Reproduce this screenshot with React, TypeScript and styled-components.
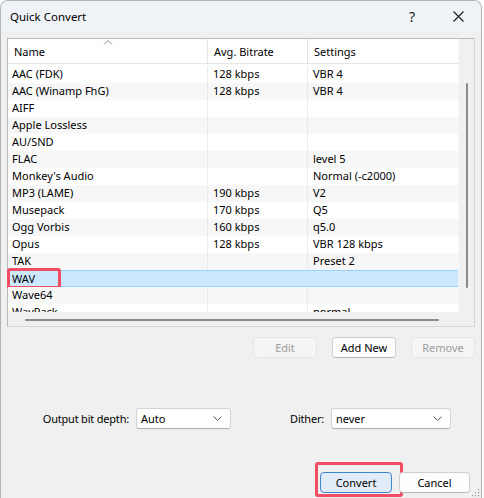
import React from 'react';
import styled, { createGlobalStyle, css } from 'styled-components';

const GlobalStyle = createGlobalStyle`
  html, body {
    margin: 0;
    padding: 0;
    background: #ffffff;
  }
  body {
    font-family: "Noto Sans", "Segoe UI", sans-serif;
    font-size: 11px;
    color: #000;
  }
`;

type Codec = [string, string, string];

const codecs: Codec[] = [
  ['AAC (FDK)', '128 kbps', 'VBR 4'],
  ['AAC (Winamp FhG)', '128 kbps', 'VBR 4'],
  ['AIFF', '', ''],
  ['Apple Lossless', '', ''],
  ['AU/SND', '', ''],
  ['FLAC', '', 'level 5'],
  ["Monkey's Audio", '', 'Normal (-c2000)'],
  ['MP3 (LAME)', '190 kbps', 'V2'],
  ['Musepack', '170 kbps', 'Q5'],
  ['Ogg Vorbis', '160 kbps', 'q5.0'],
  ['Opus', '128 kbps', 'VBR 128 kbps'],
  ['TAK', '', 'Preset 2'],
  ['WAV', '', ''],
  ['Wave64', '', ''],
  ['WavPack', '', 'normal'],
];

const SELECTED = 12;

const Window = styled.div`
  position: relative;
  width: 482px;
  height: 498px;
  box-sizing: border-box;
  border: 1px solid #b4b4b4;
  border-bottom: none;
  border-radius: 8px 8px 0 0;
  background: #f0f0f0;
  display: flex;
  flex-direction: column;
  overflow: hidden;
`;

const TitleBar = styled.div`
  height: 31px;
  flex: none;
  display: flex;
  align-items: center;
  background: #eff3f8;
  padding-left: 9px;
`;

const Title = styled.div`
  font-size: 11.5px;
  flex: 1;
`;

const CaptionButton = styled.div`
  width: 46px;
  height: 31px;
  display: flex;
  align-items: center;
  justify-content: center;
  font-size: 14px;
  color: #1a1a1a;
`;

const Body = styled.div`
  flex: 1;
  display: flex;
  flex-direction: column;
  padding: 6px 6px 0 6px;
`;

const ListBox = styled.div`
  width: 468px;
  height: 289px;
  box-sizing: border-box;
  border: 1px solid #b9b9b9;
  border-right-color: #d6d6d6;
  border-bottom-color: #d6d6d6;
  display: grid;
  grid-template-columns: 450px 16px;
  grid-template-rows: 273px 14px;
  background: #f0f0f0;
`;

const ListArea = styled.div`
  background: #fff;
  overflow-x: visible;
  overflow-y: clip;
  position: relative;
`;

const cols = '199px 100px 151px';

const HeaderRow = styled.div`
  display: grid;
  grid-template-columns: ${cols};
  height: 25px;
  box-sizing: border-box;
  border-bottom: 1px solid #e5e5e5;
  margin-bottom: 2px;
`;

const HeaderCell = styled.div<{ $first?: boolean }>`
  position: relative;
  line-height: 25px;
  padding-left: 6px;
  ${(p) =>
    !p.$first &&
    css`
      border-left: 1px solid #e5e5e5;
    `}
`;

const SortArrow = styled.svg`
  position: absolute;
  top: 1px;
  left: 50%;
  transform: translateX(-50%);
`;

const Row = styled.div<{ $alt: boolean; $selected: boolean }>`
  position: relative;
  display: grid;
  grid-template-columns: ${cols};
  height: 17px;
  box-sizing: border-box;
  background: ${(p) => (p.$selected ? '#cce8ff' : p.$alt ? '#f7f7f7' : '#fff')};
  ${(p) =>
    p.$selected &&
    css`
      border-top: 1px solid #99d1ff;
      border-bottom: 1px solid #99d1ff;
    `}
`;

const Cell = styled.div<{ $first?: boolean; $selected?: boolean }>`
  line-height: 16px;
  padding-left: ${(p) => (p.$first ? '4px' : '5px')};
  white-space: nowrap;
  overflow: hidden;
  ${(p) =>
    !p.$first &&
    css`
      border-left: 1px solid ${p.$selected ? 'transparent' : '#ebebeb'};
    `}
`;

const Highlight = styled.div`
  position: absolute;
  box-sizing: border-box;
  border: 3px solid #ee4d63;
  border-radius: 3px;
  pointer-events: none;
`;

const RowHighlight = styled(Highlight)`
  left: -1px;
  top: -3px;
  width: 54px;
  height: 21px;
`;

const VScroll = styled.div`
  background: #f0f0f0;
  border-left: 1px solid #f7f7f7;
`;

const VThumb = styled.div`
  width: 2px;
  height: 205px;
  margin: 44px 0 0 7px;
  background: #8a8a8a;
  border-radius: 1px;
`;

const HScroll = styled.div`
  background: #f0f0f0;
`;

const HThumb = styled.div`
  width: 414px;
  height: 2px;
  margin: 7px 0 0 17px;
  background: #8a8a8a;
  border-radius: 1px;
`;

const Corner = styled.div`
  background: #f0f0f0;
`;

const ButtonRow = styled.div`
  display: flex;
  justify-content: flex-end;
  gap: 15px;
  margin-top: 10px;
  width: 468px;
`;

const Button = styled.div<{ $disabled?: boolean; $primary?: boolean; $w?: number }>`
  position: relative;
  width: ${(p) => p.$w ?? 64}px;
  height: 21px;
  box-sizing: border-box;
  display: flex;
  align-items: center;
  justify-content: center;
  border-radius: 4px;
  border: 1px solid #d0d0d0;
  border-bottom-color: #b8b8b8;
  background: #fdfdfd;
  color: #000;
  ${(p) =>
    p.$disabled &&
    css`
      background: #f5f5f5;
      border-color: #e5e5e5;
      color: #9d9d9d;
    `}
  ${(p) =>
    p.$primary &&
    css`
      background: #e0edf9;
      border-color: #3c86d2;
    `}
`;

const OptionsRow = styled.div`
  display: flex;
  align-items: center;
  margin-top: 50px;
  padding-left: 39px;
`;

const Label = styled.div<{ $w: number }>`
  width: ${(p) => p.$w}px;
  margin-right: 7px;
  display: flex;
  justify-content: flex-end;
  white-space: nowrap;
  letter-spacing: -0.2px;
`;

const Select = styled.div<{ $w: number }>`
  width: ${(p) => p.$w}px;
  height: 21px;
  box-sizing: border-box;
  display: flex;
  align-items: center;
  justify-content: space-between;
  padding: 0 8px 0 4px;
  background: #fff;
  border: 1px solid #d4d4d4;
  border-bottom-color: #b0b0b0;
  border-radius: 3px;
`;

const Spacer = styled.div<{ $w: number }>`
  width: ${(p) => p.$w}px;
`;

const Footer = styled.div`
  display: flex;
  justify-content: flex-end;
  gap: 7px;
  margin-top: 43px;
  padding-right: 5px;
`;

const ConvertHighlight = styled(Highlight)`
  left: -6px;
  top: -11px;
  width: 88px;
  height: 35px;
`;

const Grip = styled.svg`
  position: absolute;
  right: 1px;
  bottom: 1px;
`;

const Chevron = () => (
  <svg width="9" height="5" viewBox="0 0 9 5">
    <path d="M0.5 0.5 L4.5 4.5 L8.5 0.5" fill="none" stroke="#606060" strokeWidth="1" />
  </svg>
);

export default function App() {
  return (
    <>
      <GlobalStyle />
      <Window>
        <TitleBar>
          <Title>Quick Convert</Title>
          <CaptionButton>?</CaptionButton>
          <CaptionButton>
            <svg width="11" height="11" viewBox="0 0 11 11">
              <path d="M0.5 0.5 L10.5 10.5 M10.5 0.5 L0.5 10.5" stroke="#1a1a1a" strokeWidth="1.1" />
            </svg>
          </CaptionButton>
        </TitleBar>
        <Body>
          <ListBox>
            <ListArea>
              <HeaderRow>
                <HeaderCell $first>
                  <SortArrow width="9" height="5" viewBox="0 0 9 5">
                    <path d="M0.5 4.5 L4.5 0.5 L8.5 4.5" fill="none" stroke="#8a8a8a" strokeWidth="1" />
                  </SortArrow>
                  Name
                </HeaderCell>
                <HeaderCell>Avg. Bitrate</HeaderCell>
                <HeaderCell>Settings</HeaderCell>
              </HeaderRow>
              {codecs.map((c, i) => {
                const selected = i === SELECTED;
                return (
                  <Row key={c[0]} $alt={i % 2 === 1} $selected={selected}>
                    <Cell $first>{c[0]}</Cell>
                    <Cell $selected={selected}>{c[1]}</Cell>
                    <Cell $selected={selected}>{c[2]}</Cell>
                    {selected && <RowHighlight />}
                  </Row>
                );
              })}
            </ListArea>
            <VScroll>
              <VThumb />
            </VScroll>
            <HScroll>
              <HThumb />
            </HScroll>
            <Corner />
          </ListBox>
          <ButtonRow>
            <Button $disabled>Edit</Button>
            <Button>Add New</Button>
            <Button $disabled>Remove</Button>
          </ButtonRow>
          <OptionsRow>
            <Label $w={83}>Output bit depth:</Label>
            <Select $w={95}>
              Auto
              <Chevron />
            </Select>
            <Spacer $w={60} />
            <Label $w={33}>Dither:</Label>
            <Select $w={120}>
              never
              <Chevron />
            </Select>
          </OptionsRow>
          <Footer>
            <Button $primary $w={72}>
              Convert
              <ConvertHighlight />
            </Button>
            <Button $w={71}>Cancel</Button>
          </Footer>
        </Body>
        <Grip width="10" height="10" viewBox="0 0 10 10">
          {[
            [8, 2],
            [5, 5],
            [8, 5],
            [2, 8],
            [5, 8],
            [8, 8],
          ].map(([x, y]) => (
            <rect key={`${x}-${y}`} x={x} y={y} width="1.2" height="1.2" fill="#9a9a9a" />
          ))}
        </Grip>
      </Window>
    </>
  );
}
